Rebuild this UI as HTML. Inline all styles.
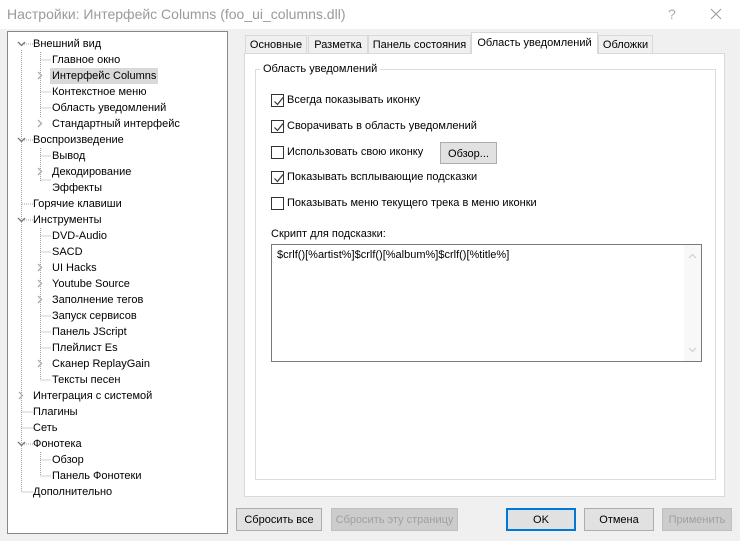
<!DOCTYPE html>
<html><head><meta charset="utf-8"><style>
*{margin:0;padding:0;box-sizing:border-box}
body{width:740px;height:541px;background:#f0f0f0;font-family:"Liberation Sans","DejaVu Sans",sans-serif;font-size:11px;color:#000;position:relative;overflow:hidden}
.abs{position:absolute}
#title{left:0;top:0;width:740px;height:29px;background:#fff;}
#title span{position:absolute;left:7px;top:6px;font-size:14px;color:#9a9a9a}
#tree{left:7px;top:31px;width:221px;height:503px;background:#fff;border:1px solid #828790}
.r{position:absolute;height:16px;line-height:16px;white-space:nowrap}
.sel{background:#d9d9d9;padding:0 2px;margin-left:-2px}
.tab{position:absolute;top:35px;height:19px;border:1px solid #d9d9d9;border-bottom:none;background:#f0f0f0;line-height:19px;text-align:center}
.tab.on{top:32px;height:22px;background:#fff;z-index:2;line-height:21px}
#panel{left:244px;top:53px;width:481px;height:444px;background:#fff;border:1px solid #d9d9d9}
#grp{left:255px;top:69px;width:461px;height:411px;border:1px solid #dcdcdc}
.cb{position:absolute;width:13px;height:13px;border:1px solid #333;background:#fff}
.cb svg{position:absolute;left:1px;top:1px}
.lbl{position:absolute;white-space:nowrap}
.btn{position:absolute;height:23px;border:1px solid #adadad;background:#e1e1e1;text-align:center;line-height:23px}
.dis{color:#a0a0a0;border-color:#bfbfbf;background:#ccc}
</style></head><body>
<div id="title" class="abs"><span>Настройки: Интерфейс Columns (foo_ui_columns.dll)</span>
<div class="abs" style="left:668px;top:6px;font-size:14px;color:#aaa">?</div>
<svg class="abs" style="left:710px;top:8px" width="12" height="12"><path d="M1 1L11 11M11 1L1 11" stroke="#999" stroke-width="1"/></svg></div>

<div id="tree" class="abs">
<svg class="abs" style="left:0;top:0" width="221" height="503">
<g stroke="#a0a0a0" stroke-dasharray="1,1" fill="none">
<path d="M13.5 18V460M13.5 460H25"/>
<path d="M32.5 20V86M32.5 28H43M32.5 60H43M32.5 76H43"/>
<path d="M32.5 116V150M32.5 124H43M32.5 148H43"/>
<path d="M32.5 196V348M32.5 204H43M32.5 220H43M32.5 284H43M32.5 300H43M32.5 316H43M32.5 348H43"/>
<path d="M32.5 420V444M32.5 428H43M32.5 444H43"/>
<path d="M13.5 380H25M13.5 396H25M14 12H25M14 108H25M14 172H25M14 188H25M14 412H25"/>
</g>
<g stroke="#777" stroke-width="1.3" fill="none">
<path d="M10 10l3.5 3.5L17 10M10 106l3.5 3.5L17 106M10 186l3.5 3.5L17 186M10 410l3.5 3.5L17 410"/>
</g>
<g stroke="#aaa" stroke-width="1.3" fill="none">
<path d="M30 40l3.5 3.5L30 47M30 88l3.5 3.5L30 95M30 136l3.5 3.5L30 143M30 232l3.5 3.5L30 239M30 248l3.5 3.5L30 255M30 264l3.5 3.5L30 271M30 328l3.5 3.5L30 335M11 360l3.5 3.5L11 367"/>
</g></svg>
<div class="r" style="left:25px;top:4px">Внешний вид</div>
<div class="r" style="left:44px;top:20px">Главное окно</div>
<div class="r sel" style="left:44px;top:36px">Интерфейс Columns</div>
<div class="r" style="left:44px;top:52px">Контекстное меню</div>
<div class="r" style="left:44px;top:68px">Область уведомлений</div>
<div class="r" style="left:44px;top:84px">Стандартный интерфейс</div>
<div class="r" style="left:25px;top:100px">Воспроизведение</div>
<div class="r" style="left:44px;top:116px">Вывод</div>
<div class="r" style="left:44px;top:132px">Декодирование</div>
<div class="r" style="left:44px;top:148px">Эффекты</div>
<div class="r" style="left:25px;top:164px">Горячие клавиши</div>
<div class="r" style="left:25px;top:180px">Инструменты</div>
<div class="r" style="left:44px;top:196px">DVD-Audio</div>
<div class="r" style="left:44px;top:212px">SACD</div>
<div class="r" style="left:44px;top:228px">UI Hacks</div>
<div class="r" style="left:44px;top:244px">Youtube Source</div>
<div class="r" style="left:44px;top:260px">Заполнение тегов</div>
<div class="r" style="left:44px;top:276px">Запуск сервисов</div>
<div class="r" style="left:44px;top:292px">Панель JScript</div>
<div class="r" style="left:44px;top:308px">Плейлист Es</div>
<div class="r" style="left:44px;top:324px">Сканер ReplayGain</div>
<div class="r" style="left:44px;top:340px">Тексты песен</div>
<div class="r" style="left:25px;top:356px">Интеграция с системой</div>
<div class="r" style="left:25px;top:372px">Плагины</div>
<div class="r" style="left:25px;top:388px">Сеть</div>
<div class="r" style="left:25px;top:404px">Фонотека</div>
<div class="r" style="left:44px;top:420px">Обзор</div>
<div class="r" style="left:44px;top:436px">Панель Фонотеки</div>
<div class="r" style="left:25px;top:452px">Дополнительно</div>
</div>

<div class="tab" style="left:245px;width:62px">Основные</div>
<div class="tab" style="left:308px;width:60px">Разметка</div>
<div class="tab" style="left:368px;width:103px">Панель состояния</div>
<div class="tab on" style="left:471px;width:127px">Область уведомлений</div>
<div class="tab" style="left:598px;width:55px">Обложки</div>
<div id="panel" class="abs"></div>
<div id="grp" class="abs"></div>
<div class="abs" style="left:260px;top:63px;background:#fff;padding:0 3px">Область уведомлений</div>

<div class="cb" style="left:271px;top:94px"><svg width="11" height="11"><path d="M1.5 5.5l3 3 5.5-7" stroke="#333" stroke-width="1.2" fill="none"/></svg></div>
<div class="lbl" style="left:287px;top:94px">Всегда показывать иконку</div>
<div class="cb" style="left:271px;top:120px"><svg width="11" height="11"><path d="M1.5 5.5l3 3 5.5-7" stroke="#333" stroke-width="1.2" fill="none"/></svg></div>
<div class="lbl" style="left:287px;top:120px">Сворачивать в область уведомлений</div>
<div class="cb" style="left:271px;top:146px"></div>
<div class="lbl" style="left:287px;top:146px">Использовать свою иконку</div>
<div class="btn" style="left:440px;top:142px;width:57px;height:22px;line-height:22px">Обзор...</div>
<div class="cb" style="left:271px;top:171px"><svg width="11" height="11"><path d="M1.5 5.5l3 3 5.5-7" stroke="#333" stroke-width="1.2" fill="none"/></svg></div>
<div class="lbl" style="left:287px;top:171px">Показывать всплывающие подсказки</div>
<div class="cb" style="left:271px;top:197px"></div>
<div class="lbl" style="left:287px;top:197px">Показывать меню текущего трека в меню иконки</div>
<div class="lbl" style="left:271px;top:228px">Скрипт для подсказки:</div>
<div class="abs" style="left:271px;top:244px;width:431px;height:118px;border:1px solid #7a7a7a;background:#fff">
<div style="position:absolute;left:5px;top:4px">$crlf()[%artist%]$crlf()[%album%]$crlf()[%title%]</div>
<div style="position:absolute;right:0;top:0;width:17px;height:116px;background:#f8f8f8"></div>
<svg class="abs" style="right:4px;top:8px" width="9" height="100"><path d="M1 5l3.5-3.5L8 5M1 95l3.5 3.5L8 95" stroke="#ccc" fill="none"/></svg>
</div>

<div class="btn" style="left:236px;top:508px;width:86px">Сбросить все</div>
<div class="btn dis" style="left:331px;top:508px;width:127px">Сбросить эту страницу</div>
<div class="btn" style="left:506px;top:508px;width:70px;border:2px solid #0078d7;line-height:21px">OK</div>
<div class="btn" style="left:584px;top:508px;width:70px">Отмена</div>
<div class="btn dis" style="left:662px;top:508px;width:70px">Применить</div>
</body></html>
